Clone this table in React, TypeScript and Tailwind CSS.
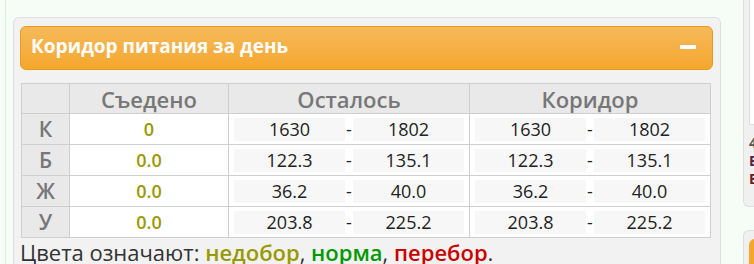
import React from "react";

type Row = { label: string; eaten: string; min: string; max: string };

const rows: Row[] = [
  { label: "К", eaten: "0", min: "1630", max: "1802" },
  { label: "Б", eaten: "0.0", min: "122.3", max: "135.1" },
  { label: "Ж", eaten: "0.0", min: "36.2", max: "40.0" },
  { label: "У", eaten: "0.0", min: "203.8", max: "225.2" },
];

const RangeCell: React.FC<{ min: string; max: string }> = ({ min, max }) => (
  <td className="border border-[#cfcfcf] bg-white px-[5px] py-[3px]">
    <div className="flex items-center">
      <span className="flex h-[23px] flex-1 items-center justify-center bg-[#f7f7f7]">{min}</span>
      <span className="w-[8px] text-center">-</span>
      <span className="flex h-[23px] flex-1 items-center justify-center bg-[#f7f7f7]">{max}</span>
    </div>
  </td>
);

export default function App() {
  return (
    <div
      className="relative flex h-[264px] w-[754px] overflow-hidden bg-[#f6fdf6]"
      style={{ fontFamily: '"Open Sans", "DejaVu Sans", sans-serif' }}
    >
      {/* left rule */}
      <div className="ml-[5px] w-px shrink-0 bg-[#d4f2d4]" />

      {/* main panel */}
      <div className="ml-[7px] mt-[17px] h-[247px] w-[708px] shrink-0 rounded-t-[6px] border-x border-t border-[#dedede] bg-[#f2f2f2] pl-[6px] pt-[8px]">
        <div className="flex h-[44px] w-[693px] items-center justify-between rounded-[6px] border border-[#ea9a1c] bg-gradient-to-b from-[#f6b959] to-[#f5a72c] pb-[4px] pl-[10px] pr-[16px]">
          <span className="text-[19px] font-bold leading-[24px] text-white">Коридор питания за день</span>
          <span className="mt-[2px] h-[4px] w-[16px] bg-white" />
        </div>

        <table className="ml-[1px] mt-[13px] w-[690px] border-collapse text-[18px] leading-[24px] text-[#222]">
          <colgroup>
            <col className="w-[48px]" />
            <col className="w-[159px]" />
            <col className="w-[241px]" />
            <col className="w-[241px]" />
          </colgroup>
          <thead>
            <tr className="h-[30px] bg-[#e9e9e9] text-[22px] leading-[28px] text-[#777]">
              <th className="border border-[#cfcfcf] font-semibold" />
              <th className="border border-[#cfcfcf] font-semibold">Съедено</th>
              <th className="border border-[#cfcfcf] font-semibold">Осталось</th>
              <th className="border border-[#cfcfcf] font-semibold">Коридор</th>
            </tr>
          </thead>
          <tbody>
            {rows.map((r) => (
              <tr key={r.label} className="h-[30px] text-center">
                <td className="border border-[#cfcfcf] bg-[#e9e9e9] text-[21px] font-semibold text-[#777]">{r.label}</td>
                <td className="border border-[#cfcfcf] bg-white text-[18px] font-semibold text-[#999900]">{r.eaten}</td>
                <RangeCell min={r.min} max={r.max} />
                <RangeCell min={r.min} max={r.max} />
              </tr>
            ))}
          </tbody>
        </table>

        <p className="mt-[2px] text-[22px] leading-[24px] text-[#333]">
          Цвета означают: <span className="font-semibold text-[#999900]">недобор</span>,{" "}
          <span className="font-semibold text-[#009900]">норма</span>,{" "}
          <span className="font-semibold text-[#cc0000]">перебор</span>.
        </p>
      </div>

      {/* right column, clipped */}
      <div className="ml-[22px] flex shrink-0 flex-col">
        <div className="h-[207px] w-[40px] rounded-bl-[6px] border-b border-l border-[#dedede] bg-[#f0f0f0] pl-[5px]">
          <div className="h-[125px] border-b border-l border-[#dedede] bg-white" />
          <div className="mt-[10px] flex flex-col gap-[2px] text-[14px] font-bold leading-[16px]">
            <span className="text-[#555]">4</span>
            <span className="text-[#552244]">Б</span>
            <span className="text-[#662222]">Б</span>
          </div>
        </div>
        <div className="mt-[23px] h-[34px] w-[40px] rounded-tl-[6px] border-l border-t border-[#dedede] bg-[#f0f0f0] pl-[5px] pt-[8px]">
          <div className="h-[25px] rounded-tl-[6px] bg-[#f5a72c]" />
        </div>
      </div>
    </div>
  );
}
